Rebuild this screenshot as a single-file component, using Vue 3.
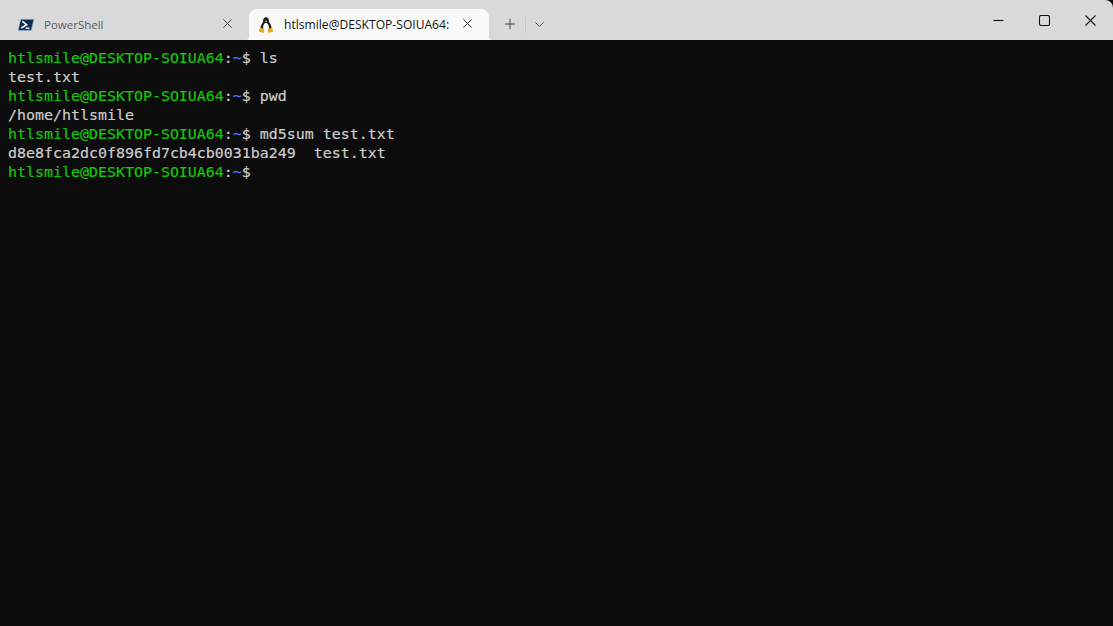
<script setup>
const lines = [
  { prompt: true, cmd: ' ls' },
  { text: 'test.txt' },
  { prompt: true, cmd: ' pwd' },
  { text: '/home/htlsmile' },
  { prompt: true, cmd: ' md5sum test.txt' },
  { text: 'd8e8fca2dc0f896fd7cb4cb0031ba249  test.txt' },
  { prompt: true, cmd: '' }
]
</script>

<template>
  <div class="window">
    <header class="titlebar">
      <div class="tab inactive">
        <svg class="tab-icon ps" width="16" height="16" viewBox="0 0 16 16">
          <path d="M3.300 2.300h11.900c.4 0 .6.300.5.700l-2.300 9.900c-.1.300-.4.500-.7.500H.8c-.4 0-.6-.3-.5-.7l2.300-9.900c.1-.3.400-.5.700-.5z" fill="#12294f" stroke="#8fb4dc" stroke-width=".7"/>
          <path d="M4.300 4.300 8.700 7.600 3.300 11" fill="none" stroke="#fff" stroke-width="1.500"/>
          <path d="M7.600 11.200h3.800" stroke="#fff" stroke-width="1.400"/>
        </svg>
        <span class="tab-title dim">PowerShell</span>
        <svg class="close" width="9" height="9" viewBox="0 0 10 10"><path d="M.5.5l9 9M9.500.5l-9 9" stroke="#3c3c3c" stroke-width="1.100" fill="none"/></svg>
      </div>
      <div class="tab active">
        <svg class="tab-icon penguin" width="14" height="16" viewBox="1 0.400 14 16.400">
          <path d="M8 .6c2 0 2.900 1.500 2.900 3.400 0 1.700 1 2.600 1.900 4.300.8 1.600 1 3.200.6 4.700H2.700C2.200 11.400 2.500 9.800 3.300 8.300 4.200 6.700 5.100 5.800 5.100 4 5.100 2.100 6 .6 8 .6z" fill="#1a1a1a"/>
          <path d="M8 6.200c1.700 0 3 2.400 3 5 0 1.500-.9 2.500-3 2.500s-3-1-3-2.500c0-2.600 1.300-5 3-5z" fill="#fff"/>
          <path d="M6.600 4.600 8 3.900l1.400.7L8 6z" fill="#e8a911"/>
          <path d="M2.900 11.800c1.100-.4 2.100.2 2.600 1.300l.7 2.100c.2.800-.4 1.400-1.100 1.400-1.100 0-2.500-.7-3.900-1-.6-.2-.6-.7-.4-1.100.3-.6.2-1.200.4-1.700.2-.6.900-.7 1.700-1z" fill="#e8a911"/>
          <path d="M13.100 11.800c-1.100-.4-2.100.2-2.600 1.300l-.7 2.100c-.2.800.4 1.400 1.100 1.400 1.100 0 2.500-.7 3.900-1 .6-.2.6-.7.4-1.100-.3-.6-.2-1.200-.4-1.700-.2-.6-.9-.7-1.700-1z" fill="#e8a911"/>
        </svg>
        <span class="tab-title strong">htlsmile@DESKTOP-SOIUA64:</span>
        <svg class="close" width="9" height="9" viewBox="0 0 10 10"><path d="M.5.5l9 9M9.500.5l-9 9" stroke="#2a2a2a" stroke-width="1.100" fill="none"/></svg>
      </div>
      <div class="new-tab">
        <svg width="10" height="10" viewBox="0 0 10 10"><path d="M5 0v10M0 5h10" stroke="#444" stroke-width="1" fill="none"/></svg>
      </div>
      <div class="divider"></div>
      <div class="dropdown">
        <svg width="9" height="5" viewBox="0 0 9 5"><path d="M.5.5l4 4 4-4" stroke="#555" stroke-width="1" fill="none"/></svg>
      </div>
      <div class="caption">
        <div class="cap-btn">
          <svg width="11" height="11" viewBox="0 0 11 11"><path d="M.5 5.500h10" stroke="#111" stroke-width="1.100" fill="none"/></svg>
        </div>
        <div class="cap-btn">
          <svg width="11" height="11" viewBox="0 0 11 11"><rect x=".5" y=".5" width="10" height="10" rx="1.800" stroke="#111" stroke-width="1.100" fill="none"/></svg>
        </div>
        <div class="cap-btn">
          <svg width="11" height="11" viewBox="0 0 11 11"><path d="M.5.500l10 10M10.500.500l-10 10" stroke="#111" stroke-width="1.100" fill="none"/></svg>
        </div>
      </div>
    </header>
    <main class="terminal">
      <div v-for="(line, i) in lines" :key="i" class="line">
        <template v-if="line.prompt"><span class="green">htlsmile@DESKTOP-SOIUA64</span><span>:</span><span class="blue">~</span><span>$</span><span>{{ line.cmd }}</span></template>
        <template v-else>{{ line.text }}</template>
      </div>
    </main>
  </div>
</template>

<style scoped>
.window {
  width: 1113px;
  height: 626px;
  display: flex;
  flex-direction: column;
  background: #0c0c0c;
  overflow: hidden;
}
.titlebar {
  height: 40px;
  flex: none;
  display: flex;
  align-items: flex-end;
  padding-left: 9px;
  background: #d9d9d9;
  border-top-right-radius: 8px;
  font-family: "Open Sans", "Noto Sans", sans-serif;
}
.tab {
  position: relative;
  width: 240px;
  height: 31px;
  flex: none;
  display: flex;
  align-items: center;
  box-sizing: border-box;
  padding: 0 17px 0 9px;
  border-radius: 8px 8px 0 0;
}
.tab.active {
  background: #f9f9f9;
  padding-left: 10px;
}
.tab.active::before,
.tab.active::after {
  content: "";
  position: absolute;
  bottom: 0;
  width: 4px;
  height: 4px;
}
.tab.active::before {
  left: -4px;
  background: radial-gradient(circle at 0 0, transparent 4px, #f9f9f9 4.500px);
}
.tab.active::after {
  right: -4px;
  background: radial-gradient(circle at 100% 0, transparent 4px, #f9f9f9 4.500px);
}
.tab-icon {
  flex: none;
  margin-right: 9px;
}
.ps {
  margin-right: 10px;
}
.penguin {
  margin-right: 11px;
}
.tab-title {
  flex: 1;
  min-width: 0;
  font-size: 11.500px;
  color: #111;
  white-space: nowrap;
  overflow: hidden;
}
.tab-title.strong {
  font-size: 12.100px;
}
.tab-title.dim {
  color: #5c5c5c;
}
.close {
  flex: none;
  margin-bottom: 2px;
}
.new-tab {
  width: 36px;
  height: 31px;
  flex: none;
  display: flex;
  align-items: center;
  justify-content: center;
  padding: 0 0 2px 5px;
  box-sizing: border-box;
}
.divider {
  width: 1px;
  height: 16px;
  margin-bottom: 7px;
  background: #c6c6c6;
}
.dropdown {
  width: 27px;
  height: 31px;
  display: flex;
  align-items: center;
  justify-content: center;
  box-sizing: border-box;
  padding-bottom: 1px;
}
.caption {
  margin-left: auto;
  height: 40px;
  display: flex;
  align-self: flex-start;
}
.cap-btn {
  width: 46px;
  height: 40px;
  display: flex;
  align-items: center;
  justify-content: center;
}
.terminal {
  flex: 1;
  padding: 9px 8px 0;
  font-family: "DejaVu Sans Mono", monospace;
  font-size: 14.950px;
  line-height: 19px;
  color: #cccccc;
  white-space: pre;
  -webkit-text-stroke: 0.2px currentColor;
}
.line {
  height: 19px;
}
.green {
  color: #16c60c;
}
.blue {
  color: #3b78ff;
}
</style>

<style>
html, body {
  margin: 0;
  background: #0c0c0c;
}
</style>
